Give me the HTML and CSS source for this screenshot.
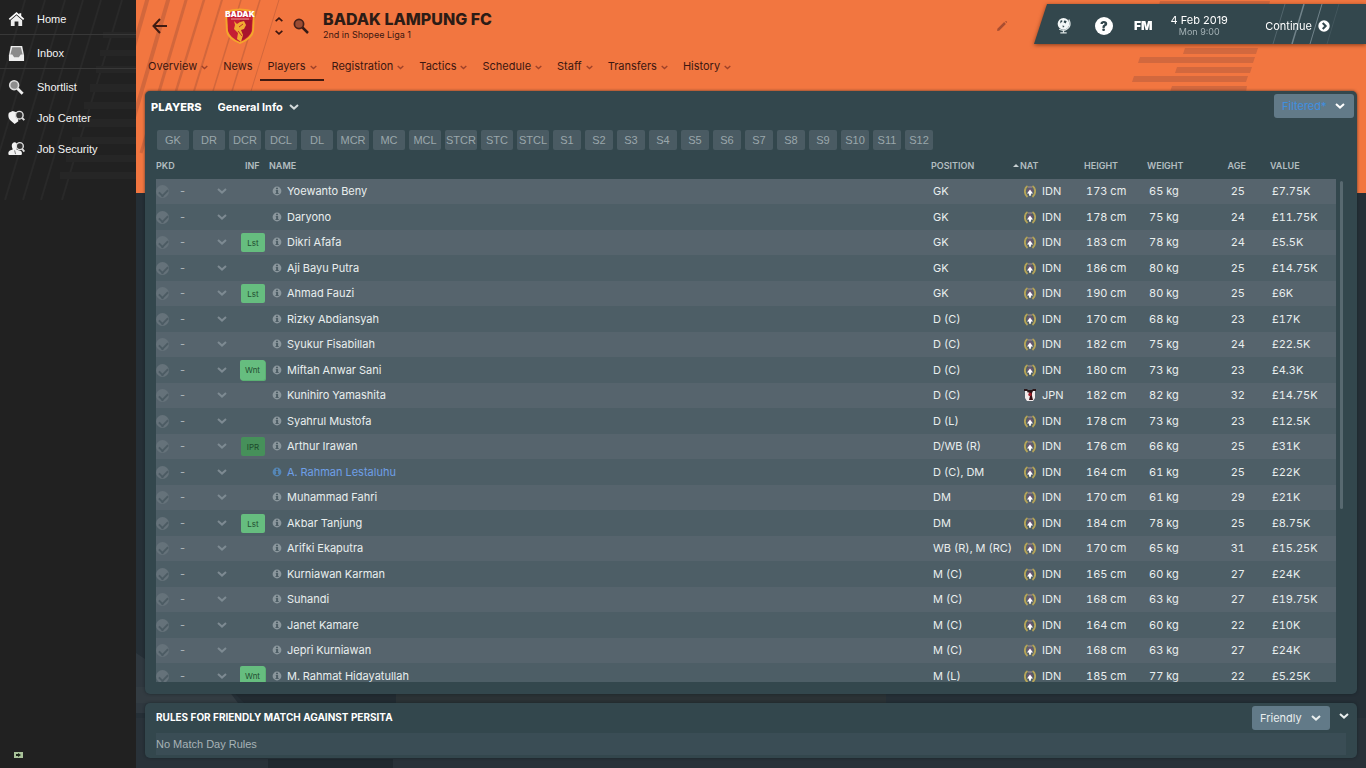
FILE: index.html
```
<!DOCTYPE html>
<html lang="en">
<head>
<meta charset="utf-8">
<title>Badak Lampung FC - Players</title>
<link rel="stylesheet" href="styles.css">
</head>
<body>
<svg class="sprite" aria-hidden="true">
  <symbol id="chev" viewBox="0 0 10 6"><path d="M1 1 5 4.600 9 1" fill="none" stroke="currentColor" stroke-width="2"/></symbol>
  <symbol id="info" viewBox="0 0 10 10"><circle cx="5" cy="5" r="4.400" fill="currentColor"/><path d="M4 1.800h2v1.400H4zM3.800 4h2.300v3h.6v1H3.500V7h.6V5h-.3z" fill="#4d5d65"/></symbol>
  <symbol id="idn" viewBox="0 0 12 13"><path d="M3.500 1C0 3 0 9.500 3.500 12M8.500 1c3.500 2 3.500 8.500 0 11" fill="none" stroke="#b5a458" stroke-width="1.900"/><path d="M6 2.500 9 5 8 9H4L3 5z" fill="#6b5570"/><path d="M6 4.500 9 8.500H7.200L6.500 11h-1l-.7-2.500H3z" fill="#fff"/><path d="M4 2h4" stroke="#a99097"/></symbol>
  <symbol id="jpn" viewBox="0 0 12 13"><path d="M1 1h10v8l-2 3H3L1 9z" fill="#f3ecec"/><path d="M0 0h3l1 1h4l1-1h3v2H9L8 4 7 3H5L4 4 3 2H0z" fill="#2b1518"/><path d="M5 3h3v4l1 4H5l1-4z" fill="#3a1015"/><circle cx="6" cy="5.500" r="1.700" fill="#a01c28"/></symbol>
</svg>

<div class="app">
  <aside class="sidebar">
    <svg class="decor" viewBox="0 0 136 200" preserveAspectRatio="none" aria-hidden="true">
      <g stroke="#292929" stroke-width="2"><path d="M25 0-15 140M45 0-15 200M65 0 5 200M83 0 23 200M101 0 41 200M122 0 62 200"/></g>
      <g fill="#262626"><path d="M103 32h33v6h-33zM100 50h36v6h-36zM96 66h40v7H96zM90 84h46v8H90zM84 102h52v7H84zM78 119h58v8H78zM72 137h64v7H72zM66 155h70v7H66zM60 172h76v7H60z"/></g>
    </svg>
    <nav class="side-nav" aria-label="Main">
      <a class="side-link ruled" href="#"><svg viewBox="0 0 18 18"><path d="M9 1 .8 8.200l1.200 1.300L9 3.500l7 6 1.200-1.300L14 5.400V2.500h-2v1.200z" fill="#fff"/><path d="M3 9.700 9 4.600l6 5.100V16h-4v-5H7v5H3z" fill="#eee"/></svg><span>Home</span></a>
      <a class="side-link ruled" href="#"><svg viewBox="0 0 18 18"><path d="M3 1h12l2 10v6H1v-6z" fill="#eee"/><path d="M4.500 2.500h9L15.500 10h-2L11.500 13h-5l-2-3h-2z" fill="#8b8b8b"/></svg><span>Inbox</span></a>
      <a class="side-link" href="#"><svg viewBox="0 0 18 18"><path d="m10 10 5.500 5.500" stroke="#eee" stroke-width="3"/><circle cx="6.500" cy="6.500" r="4.700" fill="#8d8d8d" stroke="#ddd" stroke-width="1.700"/></svg><span>Shortlist</span></a>
      <a class="side-link job" href="#"><svg viewBox="0 0 18 18"><path d="M1 4 5 2l4 1.500L11 13l-4 3-4-3.500C0 10 0 6 1 4z" fill="#f3f3f3"/><circle cx="12" cy="6.500" r="4" fill="#333" stroke="#ddd" stroke-width="1.500"/><path d="m15 9.500 2.300 2.300" stroke="#ddd" stroke-width="2"/></svg><span>Job Center</span></a>
      <a class="side-link job" href="#"><svg viewBox="0 0 18 18"><path d="M4 6c0-5 6-5 6 0 0 2-1 3-1 4l5 2c1 1 1 4 0 4H1c-1-1-1-4 1-5l3-1c0-1-1-2-1-4z" fill="#f3f3f3"/><path d="m7 11 1 4" stroke="#777"/><circle cx="12.500" cy="6.500" r="3.700" fill="#333" stroke="#ddd" stroke-width="1.500"/><path d="m15 9.500 2.300 2.800" stroke="#ddd" stroke-width="2"/></svg><span>Job Security</span></a>
    </nav>
    <button class="side-status" type="button" aria-label="Status"><svg viewBox="0 0 9 6"><path d="M0 0h9v6H0z" fill="#a9c29a"/><path d="M2 2h2V1l3 2-3 2V4H2z" fill="#182416"/></svg></button>
  </aside>

  <main class="main">
    <div class="backdrop" aria-hidden="true">
      <div class="banner">
        <svg class="stripes-left" viewBox="0 0 200 193"><g stroke="#d2673c" fill="none"><path d="M14-10-20 110" stroke-width="4"/><path d="M35-10-24 193" stroke-width="4"/><path d="M53-10 5 153" stroke-width="3"/><path d="M71-10 18 163" stroke-width="2.500"/><path d="M89-10 36 163" stroke-width="2"/><path d="M108-10 55 163M127-10 74 163" stroke-width="1.500"/><path d="M146-10 93 163" stroke-width="1"/></g></svg>
        <svg class="stripes-right" viewBox="0 0 240 100"><path d="M34 1h110l-1 4H33zM59 48h73l-2 6H57zM14 57h115l-2 6H12zM51 67h75l-2 6H49zM8 76h114l-2 6H6zM46 86h75l-1 6H44z" fill="#d2683e"/></svg>
      </div>
      <svg class="stadium" viewBox="0 0 1230 575" preserveAspectRatio="none"><path d="M0 460 60 500H90L110 520H0z" fill="#2f383f"/><path d="M0 525h1230v50H0z" fill="#293239"/><path d="M0 494h90l12 16H0z" fill="#333c42"/><path d="M95 496h165v16H110z" fill="#222b31"/><path d="M132 566h125v9H132z" fill="#20292f"/><path d="M260 496h490v14H260z" fill="#2b3235"/></svg>
    </div>

    <header class="header">
      <div class="titlebar">
        <button class="plain back" type="button" aria-label="Back"><svg viewBox="0 0 16 16"><path d="M15 8H2M8 1 1.500 8 8 15" fill="none" stroke="#401b12" stroke-width="2"/></svg></button>
        <svg class="crest" viewBox="0 0 32 38" role="img" aria-label="Club crest"><path d="M1 4Q16-1 31 4l-1 20q-1 8-14 13Q3 32 2 24z" fill="#f4a52b"/><path d="M3 6Q16 1 29 6l-1 18q-2 7-12 11Q6 31 4 24z" fill="#c51e34"/><path d="M16 13h12l-1 12q-3 6-11 9z" fill="#a9142c"/><path d="m10 14 3 3 3-2 4-1 2 4-2 4-3 1 2 5-2 7-4-3 1-6-4-4 1-4z" fill="#f1aa32"/><path d="m15 20 4-3M14 24l4 5" stroke="#c22a2d"/><path d="M7 12h18" stroke="#e89a92" stroke-width="1"/><text x="16" y="10" text-anchor="middle">BADAK</text></svg>
        <div class="stepper">
          <button class="plain" type="button" aria-label="Previous club"><svg class="flip" viewBox="0 0 10 6"><use href="#chev"/></svg></button>
          <button class="plain" type="button" aria-label="Next club"><svg viewBox="0 0 10 6"><use href="#chev"/></svg></button>
        </div>
        <button class="plain search" type="button" aria-label="Search"><svg viewBox="0 0 16 16"><path d="m9 9 6 6" stroke="#351b16" stroke-width="2.500"/><circle cx="6" cy="6" r="4.600" fill="#9b4c33" stroke="#472019" stroke-width="1.700"/></svg></button>
        <div class="club">
          <h1>BADAK LAMPUNG FC</h1>
          <p>2nd in Shopee Liga 1</p>
        </div>
        <button class="plain edit" type="button" aria-label="Edit"><svg viewBox="0 0 12 12"><path d="M2 10 9 3" stroke="#a94e31" stroke-width="2.500"/><path d="m1 11 .5-2L3 10.500zM9 1.500 10.500 3l.7-1-1-1z" fill="#a94e31"/></svg></button>
        <div class="topbox-wrap">
          <div class="topbox">
            <svg class="rays" viewBox="0 0 80 40" aria-hidden="true"><g stroke="#71838a"><path d="m15 0-12 40" opacity=".5"/><path d="m34 0-12 40" stroke-width="1.500"/><path d="m52 0-12 40"/><path d="m69 0-12 40" opacity=".25"/></g></svg>
            <button class="plain globe" type="button" aria-label="World"><svg viewBox="0 0 14 16"><circle cx="7" cy="6.500" r="5.500" fill="#f4f8f8"/><path d="M4 3.500q2-1 2 .5L4 6zm4-.5 2 1-1 2-2-1zM6 8l2 .5L6.500 10z" fill="#33474d"/><path d="M12 2.500q3 6-2 9-3 2-7 0M7 12v2.500M4 15h6" fill="none" stroke="#dce4e4" stroke-width="1.200"/></svg></button>
            <button class="help" type="button" aria-label="Help">?</button>
            <button class="fm" type="button">FM</button>
            <div class="date"><strong>4 Feb 2019</strong><span>Mon 9:00</span></div>
            <button class="continue" type="button">Continue <svg viewBox="0 0 12 12"><circle cx="6" cy="6" r="5.700" fill="#fff"/><path d="M4.700 3 7.700 6l-3 3" fill="none" stroke="#33474d" stroke-width="2"/></svg></button>
          </div>
        </div>
      </div>
      <nav class="tabs" aria-label="Club">
        <a href="#">Overview<svg><use href="#chev"/></svg></a>
        <a href="#">News</a>
        <a href="#" class="active" aria-current="page">Players<svg><use href="#chev"/></svg></a>
        <a href="#">Registration<svg><use href="#chev"/></svg></a>
        <a href="#">Tactics<svg><use href="#chev"/></svg></a>
        <a href="#">Schedule<svg><use href="#chev"/></svg></a>
        <a href="#">Staff<svg><use href="#chev"/></svg></a>
        <a href="#">Transfers<svg><use href="#chev"/></svg></a>
        <a href="#">History<svg><use href="#chev"/></svg></a>
      </nav>
    </header>

    <section class="panel players">
      <div class="panel-head">
        <h2>PLAYERS</h2>
        <label class="pick view"><select aria-label="View"><option>General Info</option></select><svg><use href="#chev"/></svg></label>
        <label class="pick boxed filter"><select aria-label="Filter"><option>Filtered*</option></select><svg><use href="#chev"/></svg></label>
      </div>
      <div class="slots" id="slots"></div>
      <div class="list">
        <div class="clip">
          <table>
            <colgroup><col class="c-pkd"><col class="c-inf"><col><col class="c-pos"><col class="c-nat"><col class="c-size"><col class="c-size"><col class="c-age"><col class="c-val"></colgroup>
            <thead><tr><th>PKD</th><th class="inf">INF</th><th>NAME</th><th>POSITION</th><th><span class="sort"></span>NAT</th><th>HEIGHT</th><th>WEIGHT</th><th class="num">AGE</th><th class="val">VALUE</th></tr></thead>
            <tbody id="rows"></tbody>
          </table>
        </div>
        <div class="scroll"><div class="thumb"></div></div>
      </div>
    </section>

    <section class="panel rules">
      <div class="rules-head">
        <h2>RULES FOR FRIENDLY MATCH AGAINST PERSITA</h2>
        <label class="pick boxed friendly"><select aria-label="Match type"><option>Friendly</option></select><svg><use href="#chev"/></svg></label>
        <button class="plain collapse" type="button" aria-label="Collapse"><svg><use href="#chev"/></svg></button>
      </div>
      <p class="rules-body">No Match Day Rules</p>
    </section>
  </main>
</div>
<script src="app.js"></script>
</body>
</html>
```
FILE: styles.css
```
* { box-sizing: border-box; }
body { margin: 0; background: #252f36; color: #e9eeee; font: 11px/14px Inter, "Liberation Sans", sans-serif; }
h1, h2, p { margin: 0; }
a { color: inherit; text-decoration: none; }
button, select { font: inherit; color: inherit; border: 0; background: none; margin: 0; padding: 0; }
svg { display: block; flex: none; }
.sprite { position: absolute; width: 0; height: 0; }
.app { display: flex; height: 100vh; min-height: 400px; overflow: hidden; }
.plain { display: flex; align-items: center; justify-content: center; }

.sidebar { position: relative; flex: none; width: 136px; display: flex; flex-direction: column; background: #212121; }
.decor { position: absolute; inset: 0 0 auto; width: 100%; height: 200px; }
.side-nav { position: relative; display: flex; flex-direction: column; padding-top: 1px; color: #f4f4f4; font-family: "Liberation Sans", sans-serif; }
.side-link { display: flex; align-items: center; gap: 12px; height: 33px; padding: 3px 0 0 8px; }
.side-link svg { width: 17px; height: 17px; }
.side-link.ruled { border-bottom: 1px solid #383838; height: 34px; }
.side-link.job { height: 31px; padding-top: 0; }
.side-status { margin: auto auto 10px 14px; }
.side-status svg { width: 9px; height: 6px; }

.main { position: relative; flex: 1; min-width: 0; display: flex; flex-direction: column; padding-bottom: 10px; }
.backdrop { position: absolute; inset: 0; display: flex; flex-direction: column; }
.banner { display: flex; justify-content: space-between; height: 193px; background: #f27640; flex: none; }
.stripes-left { width: 200px; height: 193px; }
.stripes-right { width: 240px; height: 100px; }
.stadium { flex: 1; width: 100%; min-height: 0; }

.header { position: relative; color: #3c1710; }
.titlebar { display: flex; align-items: center; height: 52px; padding-left: 16px; }
.back svg { width: 16px; height: 16px; }
.crest { width: 32px; height: 38px; margin-left: 56px; }
.crest text { font: 900 8px Inter, sans-serif; fill: #fff; }
.stepper { display: flex; flex-direction: column; gap: 8px; margin-left: 18px; }
.stepper svg { width: 10px; height: 5px; }
.flip { transform: rotate(180deg); }
.search { margin-left: 9px; }
.search svg { width: 16px; height: 16px; }
.club { margin-left: 14px; }
.club h1 { font-size: 16px; line-height: 17px; font-weight: 800; color: #2c1c16; }
.club p { font-size: 9px; line-height: 13px; }
.edit { margin-left: auto; }
.edit svg { width: 12px; height: 12px; }
.topbox-wrap { align-self: flex-start; margin: 4px 0 0 26px; filter: drop-shadow(0 1px 2px rgba(60, 20, 0, .6)); }
.topbox { position: relative; display: flex; align-items: center; width: 332px; height: 40px; padding: 3px 36px 0 22px; background: #33474d; color: #fff; clip-path: polygon(13px 0, 100% 0, 100% 100%, 0 100%); }
.rays { position: absolute; right: 16px; top: 0; width: 80px; height: 40px; }
.globe svg { width: 15px; height: 17px; }
.help { width: 18px; height: 18px; margin-left: 24px; border-radius: 50%; background: #fff; color: #33474d; font-size: 13px; font-weight: 900; text-align: center; }
.fm { margin-left: 21px; font-size: 12px; font-weight: 900; }
.date { display: flex; flex-direction: column; align-items: center; margin-left: 18px; line-height: 11px; }
.date strong { font-weight: 400; }
.date span { font-size: 9px; color: #a5b2b6; }
.continue { position: relative; display: flex; align-items: center; gap: 6px; margin-left: auto; }
.continue svg { width: 12px; height: 12px; }

.tabs { display: flex; gap: 15px; height: 29px; padding-left: 12px; }
.tabs a { display: flex; align-items: center; gap: 4px; height: 29px; padding-bottom: 2px; }
.tabs svg { width: 7px; height: 5px; margin-top: 3px; color: #9f4228; }
.tabs .active { margin: 0 -7px; padding: 0 7px; border-bottom: 2px solid #401b12; }

.panel { position: relative; margin: 0 9px; background: #33474d; border-radius: 5px; box-shadow: 0 0 3px rgba(20, 30, 36, .7); }
.panel h2 { font-size: 11px; font-weight: 800; color: #fff; }
.players { flex: 1; min-height: 0; display: flex; flex-direction: column; margin-top: 10px; margin-bottom: 9px; padding-bottom: 12px; }
.panel-head { display: flex; align-items: flex-start; height: 39px; padding: 3px 3px 0 6px; flex: none; }
.panel-head h2 { padding-top: 6px; }
.pick { position: relative; display: flex; align-items: center; }
.pick select { appearance: none; width: 100%; height: 100%; }
.pick svg { position: absolute; right: 9px; width: 10px; height: 6px; pointer-events: none; }
.view { width: 82px; height: 26px; margin-left: 16px; font-weight: 700; color: #fff; }
.view svg { right: 1px; color: #d3dadb; }
.boxed { height: 24px; border-radius: 3px; background: #627a88; }
.boxed select { padding: 0 8px; }
.filter { width: 80px; margin-left: auto; color: #fff; }
.filter select { color: #3f8fe0; }
.slots { display: flex; gap: 4px; padding-left: 12px; flex: none; }
.slot { width: 32px; height: 20px; border-radius: 2px; background: #4a5b63; color: #9aa7ab; font-size: 11px; font-family: "Liberation Sans", sans-serif; text-align: center; }
.slot.sub { width: 28px; }

.list { flex: 1; min-height: 0; display: flex; padding: 3px 12px 0 11px; }
.clip { flex: 1; min-width: 0; overflow: hidden; }
.scroll { width: 9px; padding: 28px 0 0 4px; }
.thumb { width: 3px; height: 328px; background: #586970; border-radius: 2px; }
table { width: 100%; table-layout: fixed; border-collapse: collapse; font-variant-numeric: tabular-nums; }
th { height: 26px; padding: 0; text-align: left; font-size: 9px; font-weight: 600; color: #b3bec1; }
td { height: 25px; padding: 0 0 1px 2px; white-space: nowrap; }
tbody tr { height: 25px; background: #56646d; }
tbody tr:nth-child(even), tbody tr:nth-child(even) td { height: 26px; }
tbody tr:nth-child(even) { background: #4d5e66; }
tbody tr:nth-child(even) td { padding-bottom: 0; }
.c-pkd { width: 85px; }
.c-inf { width: 28px; }
.c-pos { width: 90px; }
.c-nat { width: 63px; }
.c-size { width: 63px; }
.c-age { width: 36px; }
.c-val { width: 90px; }
th.inf { padding-left: 4px; }
.num { text-align: right; }
td.num { padding-right: 1px; }
.val { padding-left: 24px; }
td.val { padding-left: 26px; }
.sort { display: inline-block; margin: 0 1px 2px -8px; border: 3px solid transparent; border-top: 0; border-bottom-color: #c7d0d2; }
.pkd { display: flex; align-items: center; height: 24px; margin-left: -2px; color: #7d8a92; }
.pkd input { appearance: none; flex: none; display: flex; align-items: flex-start; width: 13px; height: 13px; margin: 0; border-radius: 50%; background: #65727a; }
.pkd input::before { content: ""; flex: none; width: 7px; height: 4px; margin: 4px 0 0 3px; border: solid #4d5c64; border-width: 0 0 2px 2px; transform: rotate(-45deg); }
.pkd span { margin-left: 10px; color: #adb6ba; }
.pkd button { margin: 0 14px 0 auto; }
.pkd svg { width: 10px; height: 6px; }
td.tag-cell { padding-left: 0; }
.tag { display: block; width: 24px; height: 19px; border-radius: 2px; background: #66bd7f; color: #234d31; font-size: 8px; line-height: 20px; text-align: center; }
.tag.wnt { width: 25px; height: 20px; margin-left: -1px; box-shadow: 1px 1px 0 #5ab073; }
.tag.ipr { background: #46905a; color: #1d4a2c; }
.player { display: flex; align-items: center; gap: 5px; padding-left: 1px; }
.player svg { width: 10px; height: 10px; color: #8b979d; }
.player.own { color: #6d9fe6; }
.player.own svg { color: #5586b5; }
.nation { display: flex; align-items: center; gap: 6px; padding-left: 1px; }
.nation svg { width: 12px; height: 13px; }

.rules { flex: none; padding: 3px 11px 3px; }
.rules-head { display: flex; align-items: flex-start; height: 27px; }
.rules-head h2 { font-size: 10px; font-weight: 700; padding-top: 4px; }
.friendly { width: 78px; margin: 0 9px 0 auto; }
.collapse { width: 10px; height: 20px; margin-right: -3px; }
.collapse svg { width: 10px; height: 6px; }
.rules-body { height: 22px; line-height: 22px; font-family: "Liberation Sans", sans-serif; background: #3a4d55; color: #a8b3b7; }
```
FILE: app.js
```
const slots = ["GK","DR","DCR","DCL","DL","MCR","MC","MCL","STCR","STC","STCL","S1","S2","S3","S4","S5","S6","S7","S8","S9","S10","S11","S12"];
const players = [
  ["", "Yoewanto Beny", "GK", "IDN", 173, 65, 25, "7.75"],
  ["", "Daryono", "GK", "IDN", 178, 75, 24, "11.75"],
  ["Lst", "Dikri Afafa", "GK", "IDN", 183, 78, 24, "5.5"],
  ["", "Aji Bayu Putra", "GK", "IDN", 186, 80, 25, "14.75"],
  ["Lst", "Ahmad Fauzi", "GK", "IDN", 190, 80, 25, "6"],
  ["", "Rizky Abdiansyah", "D (C)", "IDN", 170, 68, 23, "17"],
  ["", "Syukur Fisabillah", "D (C)", "IDN", 182, 75, 24, "22.5"],
  ["Wnt", "Miftah Anwar Sani", "D (C)", "IDN", 180, 73, 23, "4.3"],
  ["", "Kunihiro Yamashita", "D (C)", "JPN", 182, 82, 32, "14.75"],
  ["", "Syahrul Mustofa", "D (L)", "IDN", 178, 73, 23, "12.5"],
  ["IPR", "Arthur Irawan", "D/WB (R)", "IDN", 176, 66, 25, "31"],
  ["", "A. Rahman Lestaluhu", "D (C), DM", "IDN", 164, 61, 25, "22", "own"],
  ["", "Muhammad Fahri", "DM", "IDN", 170, 61, 29, "21"],
  ["Lst", "Akbar Tanjung", "DM", "IDN", 184, 78, 25, "8.75"],
  ["", "Arifki Ekaputra", "WB (R), M (RC)", "IDN", 170, 65, 31, "15.25"],
  ["", "Kurniawan Karman", "M (C)", "IDN", 165, 60, 27, "24"],
  ["", "Suhandi", "M (C)", "IDN", 168, 63, 27, "19.75"],
  ["", "Janet Kamare", "M (C)", "IDN", 164, 60, 22, "10"],
  ["", "Jepri Kurniawan", "M (C)", "IDN", 168, 63, 27, "24"],
  ["Wnt", "M. Rahmat Hidayatullah", "M (L)", "IDN", 185, 77, 22, "5.25"]
];

document.getElementById("slots").innerHTML = slots
  .map((s) => `<button type="button" class="slot ${/^S\d/.test(s) ? "sub" : ""}">${s}</button>`)
  .join("");

document.getElementById("rows").innerHTML = players
  .map(([tag, name, pos, nat, cm, kg, age, value, own = ""]) => `<tr>
    <td><div class="pkd"><input type="checkbox" aria-label="Pick ${name}"><span>-</span><button type="button" aria-label="Role of ${name}"><svg><use href="#chev"/></svg></button></div></td>
    <td class="tag-cell">${tag ? `<span class="tag ${tag.toLowerCase()}">${tag}</span>` : ""}</td>
    <td><a href="#" class="player ${own}"><svg><use href="#info"/></svg>${name}</a></td>
    <td>${pos}</td>
    <td><a href="#" class="nation"><svg><use href="#${nat.toLowerCase()}"/></svg>${nat}</a></td>
    <td>${cm} cm</td><td>${kg} kg</td><td class="num">${age}</td><td class="val">£${value}K</td>
  </tr>`)
  .join("");
```
